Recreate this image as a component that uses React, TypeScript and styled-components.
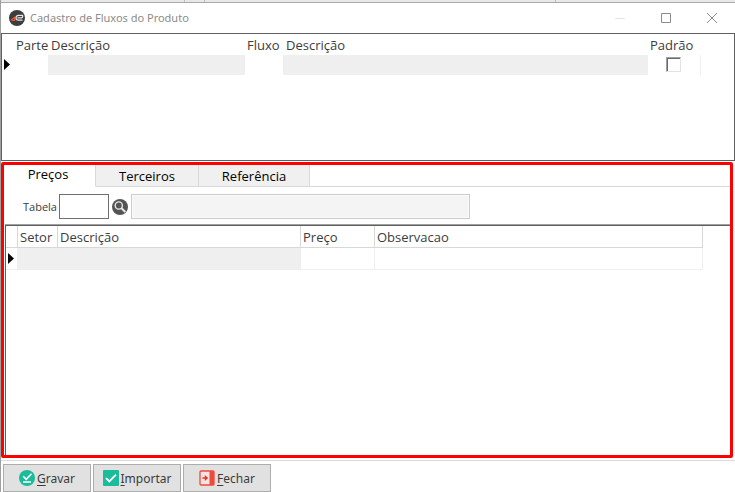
import React, { useState } from "react";
import styled, { createGlobalStyle } from "styled-components";

const GlobalStyle = createGlobalStyle`
  *, *::before, *::after { box-sizing: border-box; }
  body {
    margin: 0;
    background: #fff;
    color: #3c3c3c;
    font: 13px/16px "Open Sans", "Segoe UI", sans-serif;
  }
  button, input { font: inherit; color: inherit; }
`;

const Page = styled.div`
  display: flex;
  flex-direction: column;
  height: 100vh;
  border-left: 1px solid #a0a0a0;
`;

const Backdrop = styled.div`
  display: flex;
  flex: none;
  height: 3px;
  background: #e8e8e8;
  border-bottom: 1px solid #a9a9a9;
`;

const BackdropCell = styled.div<{ $basis: number }>`
  flex: 0 0 ${(p) => p.$basis}px;
  border-right: 1px solid #c0c0c0;
`;

const TitleBar = styled.header`
  display: flex;
  align-items: center;
  flex: none;
  height: 30px;
  padding-left: 8px;
  gap: 5px;
`;

const Title = styled.h1`
  flex: 1;
  margin: 0;
  font-family: "Noto Sans", "Segoe UI", sans-serif;
  font-size: 11px;
  font-weight: 400;
  color: #8c8c8c;
`;

const WindowControls = styled.div`
  display: flex;
`;

const WindowButton = styled.button<{ $faded?: boolean }>`
  display: grid;
  place-items: center;
  width: 46px;
  height: 30px;
  padding: 0;
  border: 0;
  background: none;
  color: ${(p) => (p.$faded ? "#e4e4e4" : "#8c8c8c")};
`;

const FlowPanel = styled.section`
  flex: none;
  height: 128px;
  padding-top: 3px;
  border: 1px solid #5f5f5f;
`;

const Table = styled.table`
  width: calc(100% - 33px);
  table-layout: fixed;
  border-collapse: separate;
  border-spacing: 0;
`;

const Col = styled.col<{ $w?: number }>`
  width: ${(p) => (p.$w ? `${p.$w}px` : "auto")};
`;

const Th = styled.th<{ $lined?: boolean }>`
  height: ${(p) => (p.$lined ? 22 : 18)}px;
  padding: ${(p) => (p.$lined ? "0 0 0 2px" : "0 0 2px 2px")};
  text-align: left;
  font-weight: 400;
  white-space: nowrap;
  border: 0 solid #d8d8d8;
  border-width: ${(p) => (p.$lined ? "0 1px 1px 0" : "0")};
`;

const Td = styled.td<{ $fill?: boolean; $lined?: boolean; $end?: boolean }>`
  height: ${(p) => (p.$lined ? 22 : 20)}px;
  padding: ${(p) => (p.$lined ? "0" : "0 0 2px")};
  text-align: center;
  vertical-align: middle;
  background: ${(p) => (p.$fill ? "#efefef" : "transparent")};
  border: 0 solid #efefef;
  border-width: ${(p) => (p.$lined ? "0 1px 1px 0" : p.$end ? "0 1px 0 0" : "0")};
`;

const RowMarker = styled.svg`
  display: block;
  margin-left: 2px;
`;

const Check = styled.input`
  appearance: none;
  display: block;
  width: 15px;
  height: 15px;
  margin: 0 0 0 18px;
  background: #fff;
  border: 1px solid;
  border-color: #a0a0a0 #e3e3e3 #e3e3e3 #a0a0a0;
  box-shadow: inset 1px 1px #696969;
  &:checked { background: #696969; }
`;

const Highlight = styled.section`
  display: flex;
  flex-direction: column;
  flex: 1;
  min-height: 0;
  margin: 1px 2px 2px 0;
  border: 3px solid #f00;
  border-radius: 2px;
`;

const TabList = styled.div`
  display: flex;
  flex: none;
  height: 22px;
  border-bottom: 1px solid #d9d9d9;
`;

const Tab = styled.button<{ $wide?: boolean }>`
  flex: 0 0 ${(p) => (p.$wide ? 111 : 103)}px;
  height: 22px;
  padding: 0;
  border: 0 solid #d9d9d9;
  border-width: 0 1px 1px 0;
  background: #f0f0f0;
  color: #000;
  &:first-child {
    flex-basis: 92px;
    padding-right: 3px;
  }
  &[aria-selected="true"] {
    padding-bottom: 3px;
    background: #fff;
    border-bottom-color: #fff;
  }
`;

const Filter = styled.div`
  display: flex;
  align-items: center;
  flex: none;
  height: 38px;
  padding: 1px 0 0 19px;
  gap: 3px;
`;

const FilterLabel = styled.label`
  flex: 0 0 33px;
  margin-right: -1px;
  font-size: 11px;
  white-space: nowrap;
`;

const CodeInput = styled.input`
  width: 50px;
  height: 25px;
  padding: 0 4px;
  border: 1px solid #707070;
  background: #fff;
`;

const SearchButton = styled.button`
  display: grid;
  width: 16px;
  height: 16px;
  padding: 0;
  border: 0;
  background: none;
`;

const NameInput = styled.input`
  width: 48%;
  height: 25px;
  padding: 0 4px;
  border: 1px solid #ccc;
  background: #f4f4f4;
  box-shadow: inset 0 0 0 1px #fafafa;
`;

const PricePanel = styled.div`
  flex: 1;
  min-height: 0;
  margin-left: 1px;
  border-top: 1px solid #5f5f5f;
  border-left: 1px solid #5f5f5f;
  box-shadow: 0 -1px #a0a0a0;
`;

const PriceTable = styled(Table)`
  width: calc(100% - 27px);
`;

const Footer = styled.footer`
  display: flex;
  flex: none;
  gap: 2px;
  padding: 3px 2px 0;
  border-top: 1px solid #dcdcdc;
`;

const ActionButton = styled.button`
  display: flex;
  align-items: center;
  justify-content: center;
  gap: 2px;
  width: 88px;
  height: 28px;
  padding: 0;
  border: 1px solid #adadad;
  background: #e1e1e1;
  font-family: "Noto Sans", "Segoe UI", sans-serif;
  font-size: 12px;
  u { text-underline-offset: 2px; }
  svg { flex: none; }
`;

const ActionText = styled.span`
  padding-top: 2px;
`;

const Marker = () => (
  <RowMarker width="6" height="11" viewBox="0 0 6 11" aria-hidden="true">
    <path d="M0 0l6 5.500-6 5.500z" fill="#000" />
  </RowMarker>
);

const Logo = () => (
  <svg width="16" height="16" viewBox="0 0 16 16" fill="none" aria-hidden="true">
    <circle cx="8" cy="8" r="8" fill="#3d3d40" />
    <path d="M2.200 10L5.600 7.300V10.300H2.500" stroke="#d9572c" strokeWidth="1.200" />
    <path d="M14 5.400H9.500Q7 5.600 7 8q0 2.200 2.500 2.200h4M8.500 7.900h3.800q1.600-.2 1.600-2.500" stroke="#e5e5e5" strokeWidth="1.200" />
  </svg>
);

const Search = () => (
  <svg width="16" height="16" viewBox="0 0 16 16" fill="none" aria-hidden="true">
    <circle cx="8" cy="8" r="8" fill="#555" />
    <circle cx="6.800" cy="6.500" r="3.600" stroke="#e8e8e8" strokeWidth="1.400" />
    <path d="M9.300 9l4 4" stroke="#e8e8e8" strokeWidth="2" />
  </svg>
);

const SaveIcon = () => (
  <svg width="16" height="16" viewBox="0 0 16 16" fill="none" aria-hidden="true">
    <circle cx="8" cy="8" r="8" fill="#1abc9c" />
    <path d="M4.200 6.300l3 3 5.300-5.500M4 12h8" stroke="#fff" strokeWidth="1.600" />
  </svg>
);

const ImportIcon = () => (
  <svg width="16" height="16" viewBox="0 0 16 16" fill="none" aria-hidden="true">
    <rect width="16" height="16" rx="1" fill="#1abc9c" />
    <path d="M3 8.200l3.300 3.300L13 4.700" stroke="#fff" strokeWidth="1.900" />
  </svg>
);

const CloseIcon = () => (
  <svg width="16" height="16" viewBox="0 0 16 16" fill="none" aria-hidden="true">
    <rect x="1" y="1" width="14" height="14" rx="1" fill="#f5e4e2" stroke="#ef4a3c" strokeWidth="1.300" />
    <path d="M10.500 1H15v14h-4.500z" fill="#ef4a3c" />
    <path d="M3.500 7.200h2.300V5l3.400 3-3.400 3V8.800H3.500z" fill="#e53528" />
  </svg>
);

const tabs = ["Preços", "Terceiros", "Referência"];

export default function App() {
  const [active, setActive] = useState(0);
  return (
    <>
      <GlobalStyle />
      <Page>
        <Backdrop aria-hidden="true">
          <BackdropCell $basis={184} />
          <BackdropCell $basis={20} />
          <BackdropCell $basis={351} />
        </Backdrop>
        <TitleBar>
          <Logo />
          <Title>Cadastro de Fluxos do Produto</Title>
          <WindowControls>
            <WindowButton $faded aria-label="Minimizar">
              <svg width="10" height="10"><path d="M0 5.500h10" stroke="currentColor" /></svg>
            </WindowButton>
            <WindowButton aria-label="Maximizar">
              <svg width="10" height="10"><path d="M.5.5h9v9h-9z" fill="none" stroke="currentColor" /></svg>
            </WindowButton>
            <WindowButton aria-label="Fechar janela">
              <svg width="10" height="10"><path d="M0 0l10 10M10 0L0 10" stroke="currentColor" /></svg>
            </WindowButton>
          </WindowControls>
        </TitleBar>

        <FlowPanel aria-label="Fluxos">
          <Table>
            <colgroup>
              <Col $w={12} /><Col $w={34} /><Col $w={1} /><Col $w={196} />
              <Col $w={38} /><Col $w={1} /><Col /><Col $w={53} />
            </colgroup>
            <thead>
              <tr>
                <Th /><Th>Parte</Th><Th /><Th>Descrição</Th><Th>Fluxo</Th><Th /><Th>Descrição</Th><Th>Padrão</Th>
              </tr>
            </thead>
            <tbody>
              <tr>
                <Td><Marker /></Td><Td /><Td $fill /><Td $fill /><Td /><Td $fill /><Td $fill />
                <Td $end><Check type="checkbox" aria-label="Padrão" /></Td>
              </tr>
            </tbody>
          </Table>
        </FlowPanel>

        <Highlight>
          <TabList role="tablist">
            {tabs.map((name, i) => (
              <Tab key={name} role="tab" $wide={i === 2} aria-selected={active === i} onClick={() => setActive(i)}>
                {name}
              </Tab>
            ))}
          </TabList>
          <Filter>
            <FilterLabel htmlFor="tabela">Tabela</FilterLabel>
            <CodeInput id="tabela" />
            <SearchButton aria-label="Pesquisar tabela"><Search /></SearchButton>
            <NameInput readOnly aria-label="Nome da tabela" />
          </Filter>
          <PricePanel>
            <PriceTable>
              <colgroup>
                <Col $w={12} /><Col $w={40} /><Col $w={243} /><Col $w={74} /><Col />
              </colgroup>
              <thead>
                <tr>
                  <Th $lined /><Th $lined>Setor</Th><Th $lined>Descrição</Th><Th $lined>Preço</Th><Th $lined>Observacao</Th>
                </tr>
              </thead>
              <tbody>
                <tr>
                  <Td $lined><Marker /></Td><Td $lined $fill /><Td $lined $fill /><Td $lined /><Td $lined />
                </tr>
              </tbody>
            </PriceTable>
          </PricePanel>
        </Highlight>

        <Footer>
          <ActionButton><SaveIcon /><ActionText><u>G</u>ravar</ActionText></ActionButton>
          <ActionButton><ImportIcon /><ActionText><u>I</u>mportar</ActionText></ActionButton>
          <ActionButton><CloseIcon /><ActionText><u>F</u>echar</ActionText></ActionButton>
        </Footer>
      </Page>
    </>
  );
}
